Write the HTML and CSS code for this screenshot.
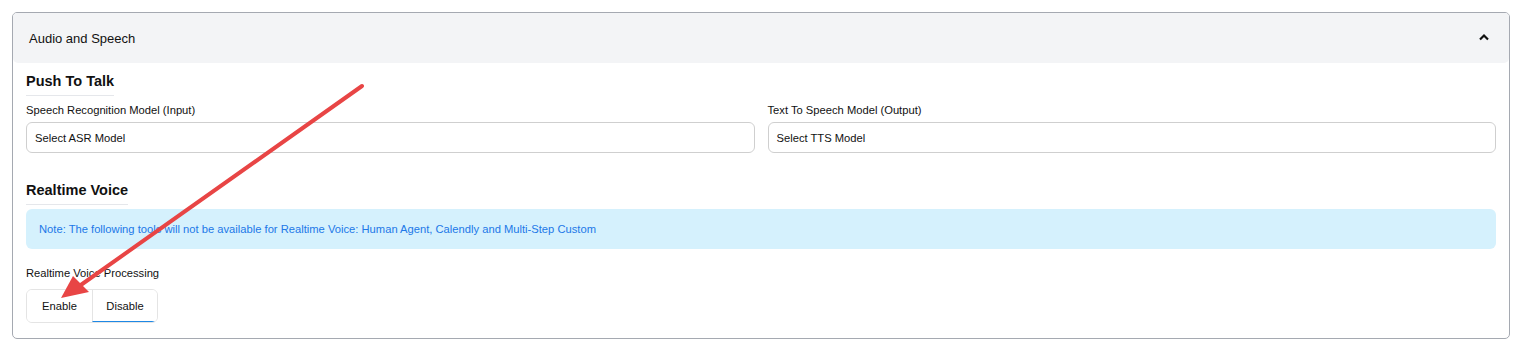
FILE: index.html
```html
<!DOCTYPE html>
<html>
<head>
<meta charset="utf-8">
<link rel="stylesheet" href="styles.css">
</head>
<body>
<div class="card">
  <div class="card-header">
    <span class="card-title">Audio and Speech</span>
    <svg class="chev" width="12" height="8" viewBox="0 0 12 8"><path d="M2 6.5 L6 2.5 L10 6.5" fill="none" stroke="#111" stroke-width="2.2"/></svg>
  </div>
  <div class="card-body">
    <h3 class="section-title">Push To Talk</h3>
    <div class="row">
      <div class="field">
        <label class="lbl">Speech Recognition Model (Input)</label>
        <div class="select">Select ASR Model</div>
      </div>
      <div class="field">
        <label class="lbl">Text To Speech Model (Output)</label>
        <div class="select">Select TTS Model</div>
      </div>
    </div>
    <h3 class="section-title second">Realtime Voice</h3>
    <div class="alert">Note: The following tools will not be available for Realtime Voice: Human Agent, Calendly and Multi-Step Custom</div>
    <label class="lbl proc">Realtime Voice Processing</label>
    <div class="btn-group">
      <button class="btn">Enable</button>
      <button class="btn active">Disable</button>
    </div>
  </div>
</div>
<svg class="arrow" width="1524" height="353" viewBox="0 0 1524 353">
  <line x1="362" y1="86" x2="78" y2="287" stroke="#e84545" stroke-width="4" stroke-linecap="round"/>
  <polygon points="61,298 73,276 89,292" fill="#e84545"/>
</svg>
</body>
</html>
```
FILE: styles.css
```css
html, body { margin: 0; padding: 0; background: #fff; }
body {
  font-family: "Liberation Sans", Arial, sans-serif;
  color: #111;
  padding: 12px 14px 0 12px;
  width: 1498px;
}
.card {
  border: 1px solid #a5a9b1;
  border-radius: 5px;
  overflow: hidden;
  height: 327px;
  box-sizing: border-box;
}
.card-header {
  background: #f3f4f6;
  height: 50px;
  display: flex;
  align-items: center;
  justify-content: space-between;
  padding: 0 19px 0 16px;
  border-bottom-right-radius: 5px;
  border-bottom-left-radius: 5px;
}
.card-title { font-size: 13px; }
.chev { display: block; margin-top: -2px; }
.card-body { padding: 9px 13px 0 13px; }
.section-title {
  margin: 0;
  font-size: 14.5px;
  font-weight: bold;
  display: inline-block;
  padding-bottom: 5px;
  border-bottom: 1px solid #e5e7eb;
  line-height: 17px;
  color: #111;
}
.section-title.second { margin-top: 29px; }
.row {
  display: flex;
  gap: 13px;
  margin-top: 8px;
}
.field { flex: 1; display: flex; flex-direction: column; }
.lbl { font-size: 11.2px; line-height: 13px; color: #111; display: block; }
.select {
  margin-top: 5px;
  height: 31px;
  box-sizing: border-box;
  border: 1px solid #cfcfcf;
  border-radius: 6px;
  padding: 0 8px;
  display: flex;
  align-items: center;
  font-size: 11.2px;
  color: #111;
}
.alert {
  margin-top: 4px;
  background: #d5f1fd;
  border-radius: 6px;
  height: 40px;
  display: flex;
  align-items: center;
  padding: 0 13px;
  font-size: 11.2px;
  color: #2178e8;
}
.proc { margin-top: 18px; }
.btn-group {
  display: inline-flex;
  margin-top: 9px;
  border: 1px solid #e4e4e4;
  border-radius: 6px;
  overflow: hidden;
}
.btn {
  font-family: "Liberation Sans", Arial, sans-serif;
  font-size: 11.2px;
  color: #111;
  background: #fff;
  border: 0;
  width: 65px;
  height: 32px;
  padding: 0;
  margin: 0;
}
.btn.active {
  border-left: 1px solid #e4e4e4;
  border-bottom: 1px solid #1e88e5;
}
.arrow { position: absolute; left: 0; top: 0; pointer-events: none; }
```
